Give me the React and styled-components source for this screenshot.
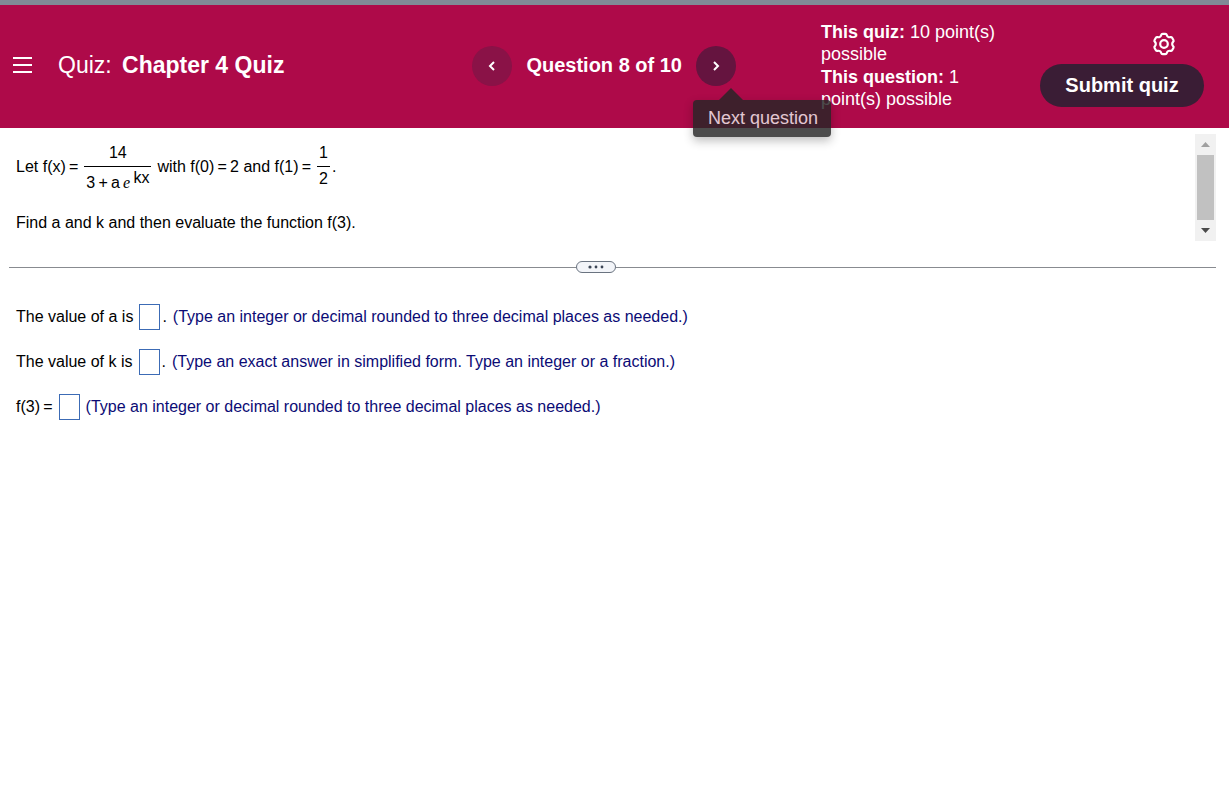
import React, { useState } from 'react';
import styled, { createGlobalStyle } from 'styled-components';

const ANSWERS = [
  {
    id: 'a',
    label: 'The value of a is',
    after: '.',
    hint: '(Type an integer or decimal rounded to three decimal places as needed.)',
  },
  {
    id: 'k',
    label: 'The value of k is',
    after: '.',
    hint: '(Type an exact answer in simplified form. Type an integer or a fraction.)',
  },
  {
    id: 'f3',
    label: 'f(3)\u2009=',
    after: '',
    hint: '(Type an integer or decimal rounded to three decimal places as needed.)',
  },
];

const Chevron = ({ d }) => (
  <svg width="12" height="12" viewBox="0 0 12 12" fill="none" stroke="#fff" strokeWidth="2" aria-hidden="true">
    <path d={d} />
  </svg>
);

const GearIcon = () => (
  <svg width="24" height="24" viewBox="0 0 24 24" fill="none" stroke="#fff" strokeWidth="2.2" strokeLinejoin="round" aria-hidden="true">
    <path d="M7.900 4.900C8.600 4.500 9 3.900 9.200 3.100 9.400 2.300 9.900 1.900 10.700 1.900h2.600c.8 0 1.300.4 1.500 1.200.2.800.6 1.400 1.300 1.800.7.400 1.400.5 2.200.2.800-.2 1.400 0 1.800.7l1.300 2.200c.4.700.3 1.400-.3 1.900-.6.600-.9 1.300-.9 2.100s.3 1.500.9 2.100c.6.500.7 1.200.3 1.900l-1.300 2.200c-.4.700-1 .9-1.800.7-.8-.3-1.500-.2-2.200.2-.7.400-1.100 1-1.300 1.800-.2.800-.7 1.200-1.500 1.200h-2.600c-.8 0-1.300-.4-1.500-1.200-.2-.8-.6-1.400-1.300-1.800-.7-.4-1.400-.5-2.200-.2-.8.2-1.400 0-1.800-.7l-1.300-2.200c-.4-.7-.3-1.400.3-1.900.6-.6.9-1.300.9-2.100s-.3-1.500-.9-2.100c-.6-.5-.7-1.200-.3-1.900l1.300-2.200c.4-.7 1-.9 1.800-.7.8.3 1.500.2 2.200-.2z" />
    <circle cx="12" cy="12" r="3.800" />
  </svg>
);

const App = () => {
  const [values, setValues] = useState({});

  const handleChange = (event) => {
    setValues({ ...values, [event.target.name]: event.target.value });
  };

  return (
    <>
      <GlobalStyle />
      <Header>
        <MenuButton aria-label="Menu">
          <svg width="20" height="18" viewBox="0 0 20 18" stroke="#fff" strokeWidth="2" aria-hidden="true">
            <path d="M0 2h19M0 9h19M0 16h19" />
          </svg>
        </MenuButton>
        <Title>
          Quiz: <strong>Chapter 4 Quiz</strong>
        </Title>
        <QuestionNav aria-label="Questions">
          <NavButton $color="#8a1247" aria-label="Previous question">
            <Chevron d="M8 2L4 6l4 4" />
          </NavButton>
          <NavLabel>Question 8 of 10</NavLabel>
          <TooltipAnchor>
            <NavButton $color="#65143f" aria-labelledby="next-tip">
              <Chevron d="M4 2l4 4-4 4" />
            </NavButton>
            <Tooltip id="next-tip" role="tooltip">Next question</Tooltip>
          </TooltipAnchor>
        </QuestionNav>
        <Points>
          <div><b>This quiz:</b> 10 point(s) possible</div>
          <div><b>This question:</b> 1 point(s) possible</div>
        </Points>
        <Actions>
          <SettingsButton aria-label="Settings">
            <GearIcon />
          </SettingsButton>
          <SubmitButton>Submit quiz</SubmitButton>
        </Actions>
      </Header>

      <Main>
        <QuestionPane>
          <QuestionText>
            <MathLine>
              <span>Let f(x)&thinsp;=</span>
              <Fraction>
                <Numerator>14</Numerator>
                <Denominator $tall>
                  3&thinsp;+&thinsp;a&thinsp;<E>e</E>&thinsp;<Exponent>kx</Exponent>
                </Denominator>
              </Fraction>
              <span>with f(0)&thinsp;=&thinsp;2 and f(1)&thinsp;=</span>
              <Fraction>
                <Numerator>1</Numerator>
                <Denominator>2</Denominator>
              </Fraction>
              <Period>.</Period>
            </MathLine>
            <Paragraph>Find a and k and then evaluate the function f(3).</Paragraph>
          </QuestionText>
          <ScrollBar>
            <ScrollButton aria-label="Scroll up">
              <svg width="9" height="5" viewBox="0 0 9 5" fill="#a0a0a0"><path d="M0 5L4.500 0 9 5z" /></svg>
            </ScrollButton>
            <ScrollThumb />
            <ScrollButton aria-label="Scroll down">
              <svg width="9" height="5" viewBox="0 0 9 5" fill="#4a4a4a"><path d="M0 0h9L4.500 5z" /></svg>
            </ScrollButton>
          </ScrollBar>
        </QuestionPane>

        <Divider>
          <Rule $first />
          <Grip aria-label="Resize question area">
            <svg width="18" height="4" viewBox="0 0 18 4" fill="#3c4656" aria-hidden="true">
              <circle cx="3" cy="2" r="1.600" />
              <circle cx="9" cy="2" r="1.400" />
              <circle cx="15" cy="2" r="1.400" />
            </svg>
          </Grip>
          <Rule />
        </Divider>

        <Answers>
          {ANSWERS.map((answer) => (
            <AnswerRow key={answer.id}>
              <label htmlFor={answer.id}>{answer.label}</label>
              <AnswerInput
                id={answer.id}
                name={answer.id}
                value={values[answer.id] || ''}
                onChange={handleChange}
                autoComplete="off"
              />
              {answer.after && <After>{answer.after}</After>}
              <Hint>{answer.hint}</Hint>
            </AnswerRow>
          ))}
        </Answers>
      </Main>
    </>
  );
};

export default App;

const GlobalStyle = createGlobalStyle`
  * {
    box-sizing: border-box;
  }
  body {
    margin: 0;
    background: #fff;
    color: #000;
    font-family: "Liberation Sans", Arial, sans-serif;
    font-size: 16px;
  }
  button {
    border: none;
    padding: 0;
    font-family: inherit;
    cursor: pointer;
  }
`;

const Header = styled.header`
  display: flex;
  align-items: center;
  padding: 16px 25px 18px 13px;
  border-top: 5px solid #808a96;
  background: #ae0a49;
  color: #fff;
`;

const MenuButton = styled.button`
  display: flex;
  padding-bottom: 2px;
  background: none;
`;

const Title = styled.h1`
  flex: 1;
  margin: 0 0 0 25px;
  padding-bottom: 2px;
  font-size: 23px;
  line-height: 28px;
  font-weight: 400;
  white-space: nowrap;

  strong {
    margin-left: 4px;
  }
`;

const QuestionNav = styled.nav`
  display: flex;
  align-items: center;
  gap: 14px;
  margin-right: 85px;
`;

const NavButton = styled.button`
  display: flex;
  align-items: center;
  justify-content: center;
  width: 40px;
  height: 40px;
  border-radius: 50%;
  background: ${(props) => props.$color};
`;

const NavLabel = styled.span`
  font-size: 20px;
  font-weight: 700;
  white-space: nowrap;
`;

const TooltipAnchor = styled.div`
  position: relative;
`;

const Tooltip = styled.div`
  position: absolute;
  top: 54px;
  left: -3px;
  z-index: 1;
  padding: 7px 13px 8px 15px;
  border-radius: 4px;
  background: #262626;
  box-shadow: 0 4px 10px rgba(0, 0, 0, 0.3);
  color: #f0f0f0;
  font-size: 18px;
  line-height: 22px;
  white-space: nowrap;
  opacity: 0.82;

  &::before {
    content: '';
    position: absolute;
    bottom: 100%;
    left: 26px;
    border: 12px solid transparent;
    border-top: none;
    border-bottom-color: #262626;
  }
`;

const Points = styled.div`
  display: flex;
  flex-direction: column;
  gap: 1px;
  width: 179px;
  margin-right: 40px;
  font-size: 18px;
  line-height: 22px;
`;

const Actions = styled.div`
  display: flex;
  flex-direction: column;
  align-self: flex-end;
  gap: 8px;
  padding-bottom: 3px;
`;

const SettingsButton = styled.button`
  display: flex;
  align-self: flex-end;
  margin-right: 28px;
  background: none;
`;

const SubmitButton = styled.button`
  width: 164px;
  height: 43px;
  border-radius: 22px;
  background: #3a1d35;
  color: #fff;
  font-size: 20px;
  font-weight: 700;
`;

const Main = styled.main`
  padding: 6px 13px 0 9px;
`;

const QuestionPane = styled.section`
  display: flex;
  justify-content: space-between;
`;

const QuestionText = styled.div`
  padding-left: 7px;
`;

const MathLine = styled.div`
  display: flex;
  align-items: center;
  gap: 6px;
`;

const Fraction = styled.span`
  display: flex;
  flex-direction: column;
`;

const Numerator = styled.span`
  display: flex;
  align-items: flex-end;
  justify-content: center;
  height: 33px;
  border-bottom: 1px solid #000;
  line-height: 26px;
`;

const Denominator = styled.span`
  height: 33px;
  padding: 0 2px;
  line-height: ${(props) => (props.$tall ? 32 : 24)}px;
  white-space: nowrap;
`;

const E = styled.i`
  font-family: "Liberation Serif", "Times New Roman", serif;
`;

const Exponent = styled.sup`
  font-size: 16px;
  line-height: 1;
  vertical-align: 5px;
`;

const Period = styled.span`
  margin-left: -4px;
`;

const Paragraph = styled.p`
  margin: 11px 0 0;
  line-height: 24px;
`;

const ScrollBar = styled.div`
  display: flex;
  flex-direction: column;
  width: 21px;
  height: 107px;
  padding: 0 2px;
  background: #f1f1f1;
`;

const ScrollButton = styled.button`
  display: flex;
  align-items: center;
  justify-content: center;
  height: 21px;
  background: none;
`;

const ScrollThumb = styled.div`
  flex: 1;
  background: #c1c1c1;
`;

const Divider = styled.div`
  display: flex;
  align-items: center;
  margin-top: 20px;
`;

const Rule = styled.div`
  flex: 1 1 0;
  max-width: ${(props) => (props.$first ? '47%' : 'none')};
  height: 1px;
  background: #888b90;
`;

const Grip = styled.button`
  display: flex;
  align-items: center;
  justify-content: center;
  width: 40px;
  height: 12px;
  border: 1px solid #6a7380;
  border-radius: 6px;
  background: #f3f5f9;
`;

const Answers = styled.form`
  display: flex;
  flex-direction: column;
  gap: 19px;
  padding: 31px 7px;
`;

const AnswerRow = styled.div`
  display: flex;
  align-items: center;
`;

const AnswerInput = styled.input`
  width: 21px;
  height: 26px;
  margin: 0 6px;
  padding: 2px;
  border: 1px solid #3c6bb5;
  border-radius: 0;
  font: inherit;
  outline: none;
`;

const After = styled.span`
  margin: 0 6px 0 -4px;
`;

const Hint = styled.span`
  color: #0b0b75;
`;
